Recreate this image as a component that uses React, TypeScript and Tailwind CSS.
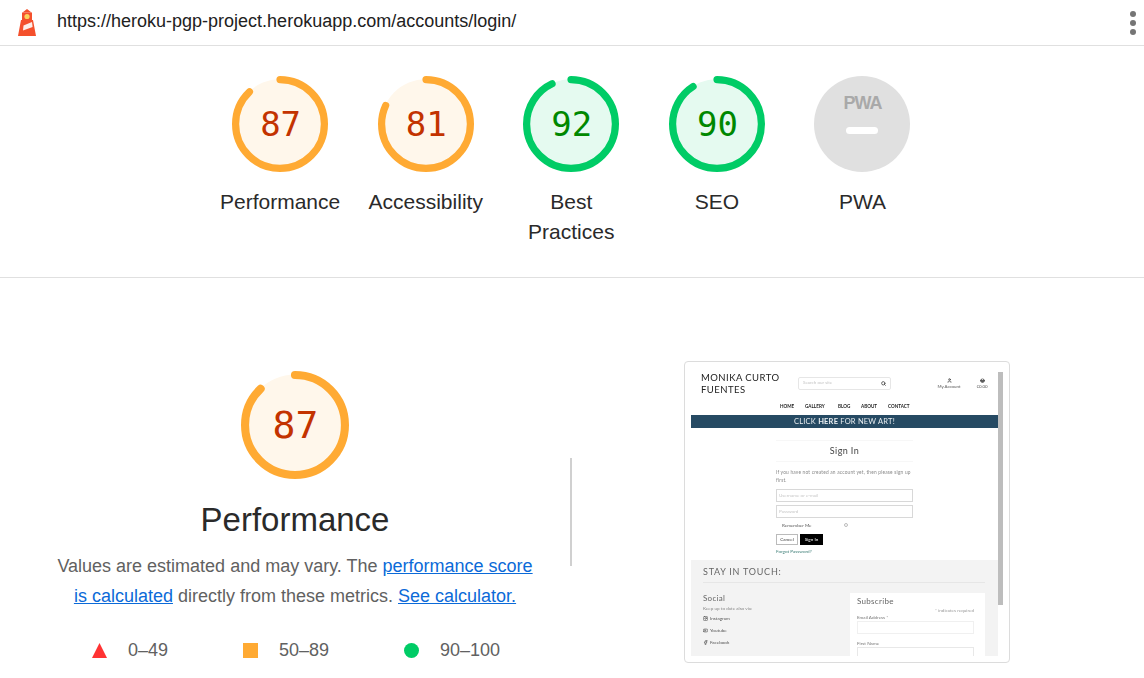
import React from 'react';
import { Search, User, ShoppingBasket, Instagram, Youtube, Facebook } from 'lucide-react';

interface GaugeProps {
  score: number;
  size: number;
  textClass: string;
}

// r / stroke are worked out from the 120 unit viewbox lighthouse uses
const Gauge: React.FC<GaugeProps> = ({ score, size, textClass }) => {
  const good = score >= 90;
  const color = good ? '#00cc66' : '#ffaa33';
  const circ = 2 * Math.PI * 56;
  return (
    <div className="relative shrink-0 flex items-center justify-center" style={{ width: size, height: size }}>
      <svg viewBox="0 0 120 120" className="absolute inset-0 w-full h-full -rotate-90">
        <circle cx="60" cy="60" r="56" fill={good ? '#e5faf0' : '#fff7eb'} stroke="none" />
        <circle
          cx="60"
          cy="60"
          r="55.5"
          fill="none"
          stroke={color}
          strokeWidth="9"
          strokeLinecap="round"
          strokeDasharray={`${(score / 100) * circ} ${circ}`}
        />
      </svg>
      <span className={`relative left-[0.5px] font-['DejaVu_Sans_Mono',monospace] ${textClass} ${good ? 'text-[#008800]' : 'text-[#c33300]'}`}>
        {score}
      </span>
    </div>
  );
};

const TopScore: React.FC<{ score: number; label: string }> = ({ score, label }) => (
  <div className="w-[145.6px] flex flex-col items-center">
    <Gauge score={score} size={96} textClass="text-[34px]" />
    <div className="mt-[15px] w-[125px] text-center text-[21px] leading-[30px] text-[#2a2a2a]">{label}</div>
  </div>
);

const LighthouseLogo = () => (
  <svg width="18" height="27" viewBox="0 0 18 27">
    <path d="M9 0l4.5 3.5h-9z" fill="#f4502c" />
    <rect x="4" y="3.5" width="10" height="8" fill="#f4502c" />
    <circle cx="9" cy="7.5" r="2.6" fill="#fbd35c" />
    <path d="M3 11h12l3 16H0z" fill="#f4502c" />
    <path d="M5.5 16.5L14 13l.6 5-9.6 3.5z" fill="#fdeee9" />
  </svg>
);

const Legend: React.FC<{ icon: React.ReactNode; label: string; className: string }> = ({ icon, label, className }) => (
  <div className={`flex items-center ${className}`}>
    {icon}
    <span className="text-[18px] text-[#616161]">{label}</span>
  </div>
);

const Thumbnail = () => (
  <div className="w-[326px] h-[302px] shrink-0 border border-[#dcdcdc] rounded-[4px] bg-white pt-[6px] pl-[6px] pr-[6px] font-['Lato',sans-serif]">
    <div className="flex h-[288px] overflow-hidden">
      <div className="w-[307px] shrink-0 flex flex-col blur-[0.3px]">
        {/* site header */}
        <div className="flex items-start h-[35px] pt-[4px]">
          <div className="ml-[10px] w-[97px] text-[9.5px] leading-[11.5px] tracking-[0.45px] text-[#222]">
            MONIKA CURTO<br />FUENTES
          </div>
          <div className="w-[93px] h-[13px] mt-[5px] border border-[#e6e6e6] rounded-[2px] flex items-center justify-between px-[4px] text-[4.5px] text-[#c4c4c4]">
            Search our site
            <Search className="w-[5px] h-[5px] text-[#333]" strokeWidth={3.5} />
          </div>
          <div className="ml-[41px] w-[34px] mt-[6px] flex flex-col items-center text-[4.4px] text-[#555]">
            <User className="w-[5px] h-[5px] text-[#333]" strokeWidth={3} />
            <span className="mt-[1px]">My Account</span>
          </div>
          <div className="w-[32px] mt-[6px] flex flex-col items-center text-[4.4px] text-[#555]">
            <ShoppingBasket className="w-[5px] h-[5px] text-[#333]" strokeWidth={3} />
            <span className="mt-[1px]">€0.00</span>
          </div>
        </div>
        <div className="h-[6px] flex items-center pl-[89px] text-[4.6px] font-bold text-[#222]">
          <span className="w-[25px]">HOME</span>
          <span className="w-[33px]">GALLERY</span>
          <span className="w-[23px]">BLOG</span>
          <span className="w-[27px]">ABOUT</span>
          <span>CONTACT</span>
        </div>
        <div className="mt-[6px] h-[13px] bg-[#264a63] flex items-center justify-center text-[7.5px] text-[#e8edf0] tracking-[0.2px]">
          CLICK&nbsp;<b>HERE</b>&nbsp;FOR NEW ART!
        </div>
        {/* sign in form */}
        <div className="ml-[85px] w-[137px] flex flex-col">
          <div className="mt-[12px] h-[22px] border-y border-[#f7f7f7] flex items-center justify-center text-[9px] tracking-[0.4px] text-[#444]">
            Sign In
          </div>
          <p className="mt-[6px] text-[4.8px] leading-[8px] tracking-[0.2px] text-[#888]">
            If you have not created an account yet, then please sign up first.
          </p>
          <div className="mt-[5px] h-[13px] border border-[#d8d8d8] flex items-center px-[2px] text-[4.6px] text-[#c8c8c8]">Username or e-mail</div>
          <div className="mt-[3px] h-[13px] border border-[#d8d8d8] flex items-center px-[2px] text-[4.6px] text-[#c8c8c8]">Password</div>
          <div className="mt-[3px] h-[8px] flex items-center pl-[6px] text-[4.6px] text-[#555]">
            <span className="w-[62px]">Remember Me</span>
            <span className="w-[4px] h-[4px] rounded-full border border-[#bbb]" />
          </div>
          <div className="mt-[5px] flex gap-[2px]">
            <span className="w-[22px] h-[11px] border border-[#bbb] flex items-center justify-center text-[4.6px] text-[#444]">Cancel</span>
            <span className="w-[23px] h-[11px] bg-black flex items-center justify-center text-[4.6px] text-white">Sign In</span>
          </div>
          <span className="mt-[3px] text-[4.6px] leading-[6px] text-[#3f7f78]">Forgot Password?</span>
        </div>
        {/* footer */}
        <div className="mt-[6px] flex-1 bg-[#f3f3f3] pl-[12px] pr-[13px] overflow-hidden">
          <div className="h-[23px] pt-[2px] flex items-center border-b border-[#e6e6e6] text-[9px] tracking-[0.75px] text-[#666]">STAY IN TOUCH:</div>
          <div className="flex">
            <div className="w-[147px] pt-[10px] text-[#666]">
              <div className="text-[8px] leading-[10px] tracking-[0.3px]">Social</div>
              <div className="mt-[2px] text-[4.6px] leading-[6px] text-[#888]">Keep up to date also via:</div>
              <div className="mt-[3px] flex items-center gap-[2px] h-[8px] text-[4.6px] text-[#555]"><Instagram className="w-[5px] h-[5px]" strokeWidth={3} />Instagram</div>
              <div className="mt-[4px] flex items-center gap-[2px] h-[8px] text-[4.6px] text-[#555]"><Youtube className="w-[5px] h-[5px]" strokeWidth={3} />Youtube</div>
              <div className="mt-[4px] flex items-center gap-[2px] h-[8px] text-[4.6px] text-[#555]"><Facebook className="w-[5px] h-[5px]" strokeWidth={3} />Facebook</div>
            </div>
            <div className="mt-[10px] w-[135px] h-[80px] bg-white px-[7px] pr-[11px] text-[4.6px] text-[#777]">
              <div className="pt-[3px] text-[8px] leading-[10px] tracking-[0.3px] text-[#666]">Subscribe</div>
              <div className="mt-[1px] text-right text-[#999]">* indicates required</div>
              <div>Email Address *</div>
              <div className="h-[13px] border border-[#f0f0f0]" />
              <div className="mt-[6px]">First Name</div>
              <div className="h-[13px] border border-[#e8e8e8]" />
            </div>
          </div>
        </div>
      </div>
      {/* scrollbar */}
      <div className="w-[5px] shrink-0 pt-[4px]">
        <div className="h-[233px] bg-[#bdbdbd]" />
      </div>
    </div>
  </div>
);

export default function App() {
  return (
    <div className="w-[1144px] h-[678px] overflow-hidden bg-white font-['Liberation_Sans',Arial,sans-serif]">
      <header className="h-[46px] border-b border-[#e0e0e0] flex items-center pl-[18px] pr-[8px]">
        <LighthouseLogo />
        <span className="ml-[21px] mb-[2px] text-[18px] text-[#212121]">https://heroku-pgp-project.herokuapp.com/accounts/login/</span>
        <div className="ml-auto flex flex-col gap-[3px]">
          <span className="w-[6px] h-[6px] rounded-full bg-[#757575]" />
          <span className="w-[6px] h-[6px] rounded-full bg-[#757575]" />
          <span className="w-[6px] h-[6px] rounded-full bg-[#757575]" />
        </div>
      </header>

      <section className="h-[232px] border-b border-[#e0e0e0] pt-[30px] pr-[1.4px] flex justify-center items-start">
        <TopScore score={87} label="Performance" />
        <TopScore score={81} label="Accessibility" />
        <TopScore score={92} label="Best Practices" />
        <TopScore score={90} label="SEO" />
        <div className="w-[145.6px] flex flex-col items-center">
          <div className="w-[96px] h-[96px] rounded-full bg-[#e0e0e0] flex flex-col items-center">
            <span className="mt-[16px] text-[18px] leading-[22px] font-bold tracking-[-1px] text-[#a9a9a9]">PWA</span>
            <span className="mt-[13px] w-[32px] h-[7px] rounded-full bg-white" />
          </div>
          <div className="mt-[15px] text-[21px] leading-[30px] text-[#2a2a2a]">PWA</div>
        </div>
      </section>

      <section className="flex items-start pt-[83px] pl-[45px]">
        <div className="w-[500px] shrink-0 pt-[10px] flex flex-col items-center">
          <Gauge score={87} size={108} textClass="text-[38px]" />
          <h2 className="mt-[21px] text-[33px] leading-[40px] text-[#2a2a2a]">Performance</h2>
          <p className="mt-[11px] w-[490px] text-center text-[18px] leading-[30px] text-[#616161]">
            Values are estimated and may vary. The <a className="text-[#0b6ad8] underline">performance score is calculated</a> directly from these metrics. <a className="text-[#0b6ad8] underline">See calculator.</a>
          </p>
          <div className="mt-[26px] w-[500px] flex">
            <Legend
              className="ml-[47px] w-[151px]"
              label="0–49"
              icon={<span className="mr-[21px] w-[15px] h-[15px] bg-[#ff3333] [clip-path:polygon(50%_0,100%_100%,0_100%)]" />}
            />
            <Legend
              className="w-[161px]"
              label="50–89"
              icon={<span className="mr-[21px] w-[15px] h-[15px] bg-[#ffaa33]" />}
            />
            <Legend
              label="90–100"
              icon={<span className="mr-[21px] w-[15px] h-[15px] rounded-full bg-[#00cc66]" />}
            />
          </div>
        </div>
        <div className="ml-[25px] mt-[97px] w-[2px] h-[108px] shrink-0 bg-[#d0d0d0]" />
        <div className="ml-[112px]">
          <Thumbnail />
        </div>
      </section>
    </div>
  );
}
